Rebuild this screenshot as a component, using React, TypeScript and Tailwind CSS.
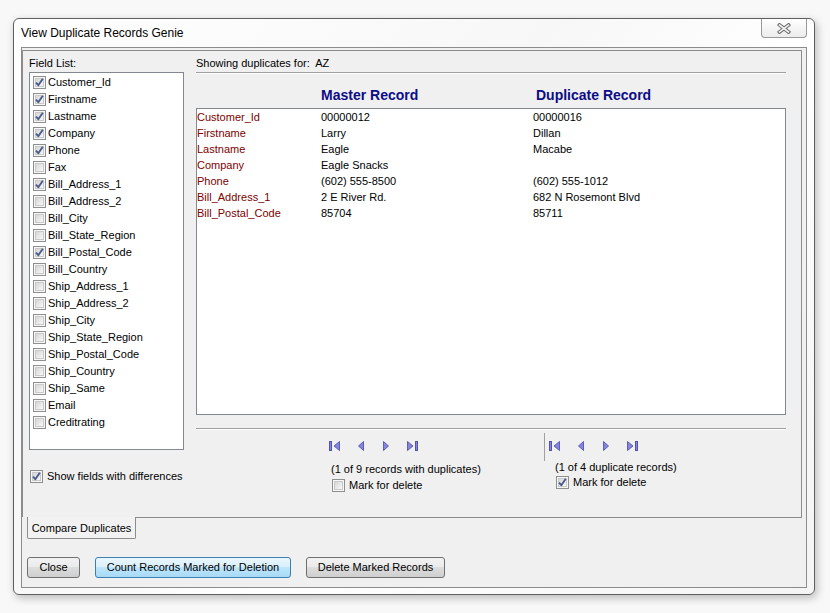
import React from 'react';

const FONT = { fontFamily: '"Liberation Sans", Arial, sans-serif' };

const fields: [string, boolean][] = [
  ['Customer_Id', true],
  ['Firstname', true],
  ['Lastname', true],
  ['Company', true],
  ['Phone', true],
  ['Fax', false],
  ['Bill_Address_1', true],
  ['Bill_Address_2', false],
  ['Bill_City', false],
  ['Bill_State_Region', false],
  ['Bill_Postal_Code', true],
  ['Bill_Country', false],
  ['Ship_Address_1', false],
  ['Ship_Address_2', false],
  ['Ship_City', false],
  ['Ship_State_Region', false],
  ['Ship_Postal_Code', false],
  ['Ship_Country', false],
  ['Ship_Same', false],
  ['Email', false],
  ['Creditrating', false],
];

const rows: [string, string, string][] = [
  ['Customer_Id', '00000012', '00000016'],
  ['Firstname', 'Larry', 'Dillan'],
  ['Lastname', 'Eagle', 'Macabe'],
  ['Company', 'Eagle Snacks', ''],
  ['Phone', '(602) 555-8500', '(602) 555-1012'],
  ['Bill_Address_1', '2 E River Rd.', '682 N Rosemont Blvd'],
  ['Bill_Postal_Code', '85704', '85711'],
];

const CheckBox: React.FC<{ checked?: boolean }> = ({ checked }) => (
  <svg width="13" height="13" viewBox="0 0 13 13" className="shrink-0">
    <defs>
      <linearGradient id="cbInner" x1="0" y1="0" x2="1" y2="1">
        <stop offset="0" stopColor="#d4d4d4" />
        <stop offset="1" stopColor="#fafafa" />
      </linearGradient>
    </defs>
    <rect x="0.5" y="0.5" width="12" height="12" fill="#f6f6f6" stroke="#8e8f8f" />
    <rect x="2.5" y="2.5" width="8" height="8" fill="url(#cbInner)" stroke="#c9c9c9" />
    {checked && (
      <path d="M3 6.6 L5.3 9.2 L9.8 2.8" fill="none" stroke="#4a5b8c" strokeWidth="1.9" strokeLinejoin="round" />
    )}
  </svg>
);

const NavIcon: React.FC<{ kind: 'first' | 'prev' | 'next' | 'last' }> = ({ kind }) => {
  const fill = '#8585dc';
  const stroke = '#5252b4';
  if (kind === 'first')
    return (
      <svg width="11" height="10" viewBox="0 0 11 10">
        <rect x="0.5" y="0.5" width="2" height="9" fill={fill} stroke={stroke} />
        <path d="M5 5 L10.5 0.5 L10.5 9.5 Z" fill={fill} stroke={stroke} strokeWidth="0.9" />
      </svg>
    );
  if (kind === 'prev')
    return (
      <svg width="6" height="10" viewBox="0 0 6 10">
        <path d="M0.5 5 L5.5 0.5 L5.5 9.5 Z" fill={fill} stroke={stroke} strokeWidth="0.9" />
      </svg>
    );
  if (kind === 'next')
    return (
      <svg width="6" height="10" viewBox="0 0 6 10">
        <path d="M5.5 5 L0.5 0.5 L0.5 9.5 Z" fill={fill} stroke={stroke} strokeWidth="0.9" />
      </svg>
    );
  return (
    <svg width="11" height="10" viewBox="0 0 11 10">
      <path d="M6 5 L0.5 0.5 L0.5 9.5 Z" fill={fill} stroke={stroke} strokeWidth="0.9" />
      <rect x="8.5" y="0.5" width="2" height="9" fill={fill} stroke={stroke} />
    </svg>
  );
};

const NavBar: React.FC = () => (
  <div className="flex items-start h-[10px]">
    <NavIcon kind="first" />
    <div className="ml-[18px]"><NavIcon kind="prev" /></div>
    <div className="ml-[19px]"><NavIcon kind="next" /></div>
    <div className="ml-[18px]"><NavIcon kind="last" /></div>
  </div>
);

const WinButton: React.FC<{ label: string; width: string; hot?: boolean }> = ({ label, width, hot }) => (
  <div
    className={`${width} h-[21px] rounded-[3px] border flex items-center justify-center text-[11px] text-black ${
      hot
        ? 'border-[#3c7fb1] bg-[linear-gradient(#eaf6fd_0%,#d9f0fc_45%,#bee6fd_50%,#a7d9f5_100%)]'
        : 'border-[#707070] bg-[linear-gradient(#f2f2f2_0%,#ebebeb_45%,#dddddd_50%,#cfcfcf_100%)]'
    }`}
  >
    {label}
  </div>
);

export default function App() {
  return (
    <div className="w-[830px] h-[613px] bg-[#f8f8f8] pt-[18px] pl-[13px] overflow-hidden" style={FONT}>
      <div className="w-[802px] h-[577px] border border-[#5f5f5f] rounded-[6px] bg-[linear-gradient(135deg,#ffffff_0%,#f7f7f7_40%,#ffffff_60%,#f4f4f4_100%)] shadow-[2px_3px_9px_rgba(0,0,0,0.25)] flex flex-col px-[7px] pb-[6px]">
        {/* title bar */}
        <div className="h-[28px] flex items-start justify-between">
          <div className="text-[12px] text-black leading-[28px]">View Duplicate Records Genie</div>
          <div className="w-[46px] h-[19px] border-x border-b border-[#9a9a9a] rounded-b-[4px] bg-[linear-gradient(#ffffff,#ececec)] flex items-center justify-center">
            <svg width="14" height="11" viewBox="0 0 14 11">
              <path d="M2.5 2 L11.5 9 M11.5 2 L2.5 9" stroke="#6b6b6b" strokeWidth="3.6" strokeLinecap="square" />
              <path d="M2.5 2 L11.5 9 M11.5 2 L2.5 9" stroke="#f2f2f2" strokeWidth="1.6" strokeLinecap="square" />
            </svg>
          </div>
        </div>

        {/* client area */}
        <div className="flex-1 border border-[#8c8c8c] bg-[#f0f0f0] flex flex-col pt-[2px] pr-[4px] text-[11px] text-black">
          {/* tab page */}
          <div className="h-[467px] border-l border-t border-r border-[#8c8c8c] flex pl-[6px] pt-[6px]">
            {/* field list column */}
            <div className="w-[155px] flex flex-col">
              <div className="leading-[13px] h-[13px]">Field List:</div>
              <div className="mt-[2px] h-[378px] border border-[#828790] bg-white pt-[1px] pl-[3px]">
                {fields.map(([name, on]) => (
                  <div key={name} className="h-[17px] flex items-center gap-[2px]">
                    <CheckBox checked={on} />
                    <span className="leading-[13px]">{name}</span>
                  </div>
                ))}
              </div>
              <div className="mt-[20px] flex items-center gap-[4px] pl-[1px] h-[13px]">
                <CheckBox checked />
                <span className="leading-[13px]">Show fields with differences</span>
              </div>
            </div>

            {/* compare column */}
            <div className="ml-[12px] w-[590px] flex flex-col">
              <div className="leading-[13px] h-[13px]">Showing duplicates for:&nbsp; AZ</div>
              <div className="mt-[2px] border-t border-[#a0a0a0] border-b border-b-white" />
              <div className="mt-[13px] h-[16px] flex text-[14px] font-bold text-[#0c0c88] leading-[16px]">
                <div className="w-[125px]" />
                <div className="w-[215px]">Master Record</div>
                <div>Duplicate Record</div>
              </div>
              <div className="mt-[5px] h-[307px] border border-[#828790] bg-white">
                {rows.map(([label, master, dup]) => (
                  <div key={label} className="grid grid-cols-[124px_212px_1fr] h-[16px] leading-[16px]">
                    <div className="text-[#800000]">{label}</div>
                    <div>{master}</div>
                    <div>{dup}</div>
                  </div>
                ))}
              </div>
              <div className="mt-[13px] border-t border-[#a0a0a0] border-b border-b-white" />
              <div className="flex">
                <div className="w-[348px] pl-[133px] pt-[11px] flex flex-col">
                  <NavBar />
                  <div className="mt-[12px] ml-[2px] leading-[13px] h-[13px]">(1 of 9 records with duplicates)</div>
                  <div className="mt-[3px] ml-[3px] flex items-center gap-[4px] h-[13px]">
                    <CheckBox />
                    <span className="leading-[13px]">Mark for delete</span>
                  </div>
                </div>
                <div className="w-px h-[28px] mt-[3px] bg-[#a0a0a0]" />
                <div className="pl-[4px] pt-[11px] flex flex-col">
                  <NavBar />
                  <div className="mt-[10px] ml-[6px] leading-[13px] h-[13px]">(1 of 4 duplicate records)</div>
                  <div className="mt-[2px] ml-[7px] flex items-center gap-[4px] h-[13px]">
                    <CheckBox checked />
                    <span className="leading-[13px]">Mark for delete</span>
                  </div>
                </div>
              </div>
            </div>
          </div>

          {/* tab strip */}
          <div className="h-[22px] flex">
            <div className="w-[5px]" />
            <div className="w-[109px] h-[22px] border-x border-b border-[#8c8c8c] rounded-b-[2px] bg-[#f2f2f2] flex items-center justify-center pt-[2px]">
              Compare Duplicates
            </div>
            <div className="flex-1 border-t border-[#8c8c8c]" />
          </div>

          {/* buttons */}
          <div className="mt-[18px] pl-[5px] flex">
            <WinButton label="Close" width="w-[53px]" />
            <div className="ml-[15px]">
              <WinButton label="Count Records Marked for Deletion" width="w-[196px]" hot />
            </div>
            <div className="ml-[15px]">
              <WinButton label="Delete Marked Records" width="w-[139px]" />
            </div>
          </div>
        </div>
      </div>
    </div>
  );
}
